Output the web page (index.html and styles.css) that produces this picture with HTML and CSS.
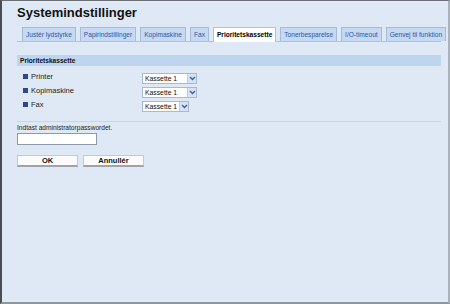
FILE: index.html
```html
<!DOCTYPE html>
<html lang="da">
<head>
  <meta charset="UTF-8">
  <title>Systemindstillinger</title>
  <link rel="stylesheet" href="styles.css">
</head>
<body>
  <div class="page">
    <h1>Systemindstillinger</h1>

    <div class="tabs">
      <span class="tab">Justér lydstyrke</span>
      <span class="tab">Papirindstillinger</span>
      <span class="tab">Kopimaskine</span>
      <span class="tab">Fax</span>
      <span class="tab active">Prioritetskassette</span>
      <span class="tab">Tonerbesparelse</span>
      <span class="tab">I/O-timeout</span>
      <span class="tab">Genvej til funktion</span>
    </div>

    <div class="section-head">Prioritetskassette</div>

    <div class="rows">
      <div class="row">
        <span class="label"><i class="bullet"></i>Printer</span>
        <span class="select wide">Kassette 1<b class="arrow"><svg width="7" height="5" viewBox="0 0 7 5"><path d="M1 1l2.5 2.5L6 1" fill="none" stroke="#3b5ea8" stroke-width="1.4"/></svg></b></span>
      </div>
      <div class="row">
        <span class="label"><i class="bullet"></i>Kopimaskine</span>
        <span class="select wide">Kassette 1<b class="arrow"><svg width="7" height="5" viewBox="0 0 7 5"><path d="M1 1l2.5 2.5L6 1" fill="none" stroke="#3b5ea8" stroke-width="1.4"/></svg></b></span>
      </div>
      <div class="row">
        <span class="label"><i class="bullet"></i>Fax</span>
        <span class="select">Kassette 1<b class="arrow"><svg width="7" height="5" viewBox="0 0 7 5"><path d="M1 1l2.5 2.5L6 1" fill="none" stroke="#3b5ea8" stroke-width="1.4"/></svg></b></span>
      </div>
    </div>

    <div class="password">
      <div class="hint">Indtast administratorpasswordet.</div>
      <input type="password" class="pw-input">
    </div>

    <div class="buttons">
      <button class="btn">OK</button>
      <button class="btn">Annullér</button>
    </div>
  </div>
</body>
</html>
```

FILE: styles.css
```css
* {
  box-sizing: border-box;
}
html, body {
  margin: 0;
  padding: 0;
  height: 100%;
}
body {
  background: #dee9f5;
  font-family: "Liberation Sans", Arial, sans-serif;
  border-left: 2px solid #4a4d52;
  border-top: 1px solid #6a6d72;
  border-right: 2px solid #a9b2bd;
  border-bottom: 2px solid #8e969f;
}

.page {
  padding: 4px 7px 0 15px;
}

h1 {
  margin: 0;
  font-size: 13px;
  font-weight: bold;
  color: #111;
  height: 22px;
  line-height: 16px;
}

.tabs {
  display: flex;
  gap: 4px;
  padding-left: 5px;
  border-bottom: 1px solid #b4c1d1;
  height: 15px;
  align-items: flex-end;
}

.tab {
  height: 14px;
  line-height: 13px;
  padding: 0 3px;
  font-size: 6.6px;
  color: #2f55a5;
  background: #c5d9f3;
  border: 1px solid #a6bbd7;
  border-bottom: none;
  white-space: nowrap;
}

.tab.active {
  background: #fff;
  color: #000;
  font-weight: bold;
  height: 15px;
  line-height: 14px;
  margin-bottom: -1px;
  border-color: #b4c1d1;
}

.section-head {
  margin-top: 13px;
  height: 11px;
  line-height: 11px;
  background: #bed5ee;
  padding-left: 3px;
  font-size: 6.6px;
  font-weight: bold;
  color: #111;
}

.rows {
  padding-top: 5px;
}

.row {
  display: flex;
  align-items: center;
  height: 14px;
}

.label {
  display: flex;
  align-items: center;
  width: 125px;
  padding-left: 6px;
  padding-bottom: 4px;
  font-size: 7.5px;
  color: #222;
}

.bullet {
  width: 5px;
  height: 5px;
  background: #30478a;
  margin-right: 3px;
}

.select {
  display: flex;
  align-items: center;
  justify-content: space-between;
  width: 47px;
  height: 11px;
  background: #fff;
  border: 1px solid #a7b8cf;
  font-size: 6.8px;
  color: #111;
  padding-left: 2px;
  white-space: nowrap;
}

.select.wide {
  width: 55px;
}

.arrow {
  display: flex;
  align-items: center;
  justify-content: center;
  width: 9px;
  height: 9px;
  background: #d7e3f5;
  border-left: 1px solid #c0cde0;
}

.password {
  margin-top: 8px;
  border-top: 1px solid #c9d5e3;
  padding-top: 2px;
}

.hint {
  font-size: 6.6px;
  color: #222;
  height: 9px;
}

.pw-input {
  display: block;
  width: 80px;
  height: 12px;
  margin: 0;
  padding: 0;
  border: 1px solid #8d9aab;
  background: #fff;
}

.buttons {
  display: flex;
  gap: 5px;
  margin-top: 10px;
}

.btn {
  width: 61px;
  height: 12px;
  margin: 0;
  padding: 0;
  font-family: "Liberation Sans", Arial, sans-serif;
  font-size: 7.5px;
  font-weight: bold;
  color: #111;
  background: #fbfbfb;
  border: 1px solid #c6c9cd;
  border-bottom: 2px solid #9ea3a9;
  line-height: 9px;
}
```
